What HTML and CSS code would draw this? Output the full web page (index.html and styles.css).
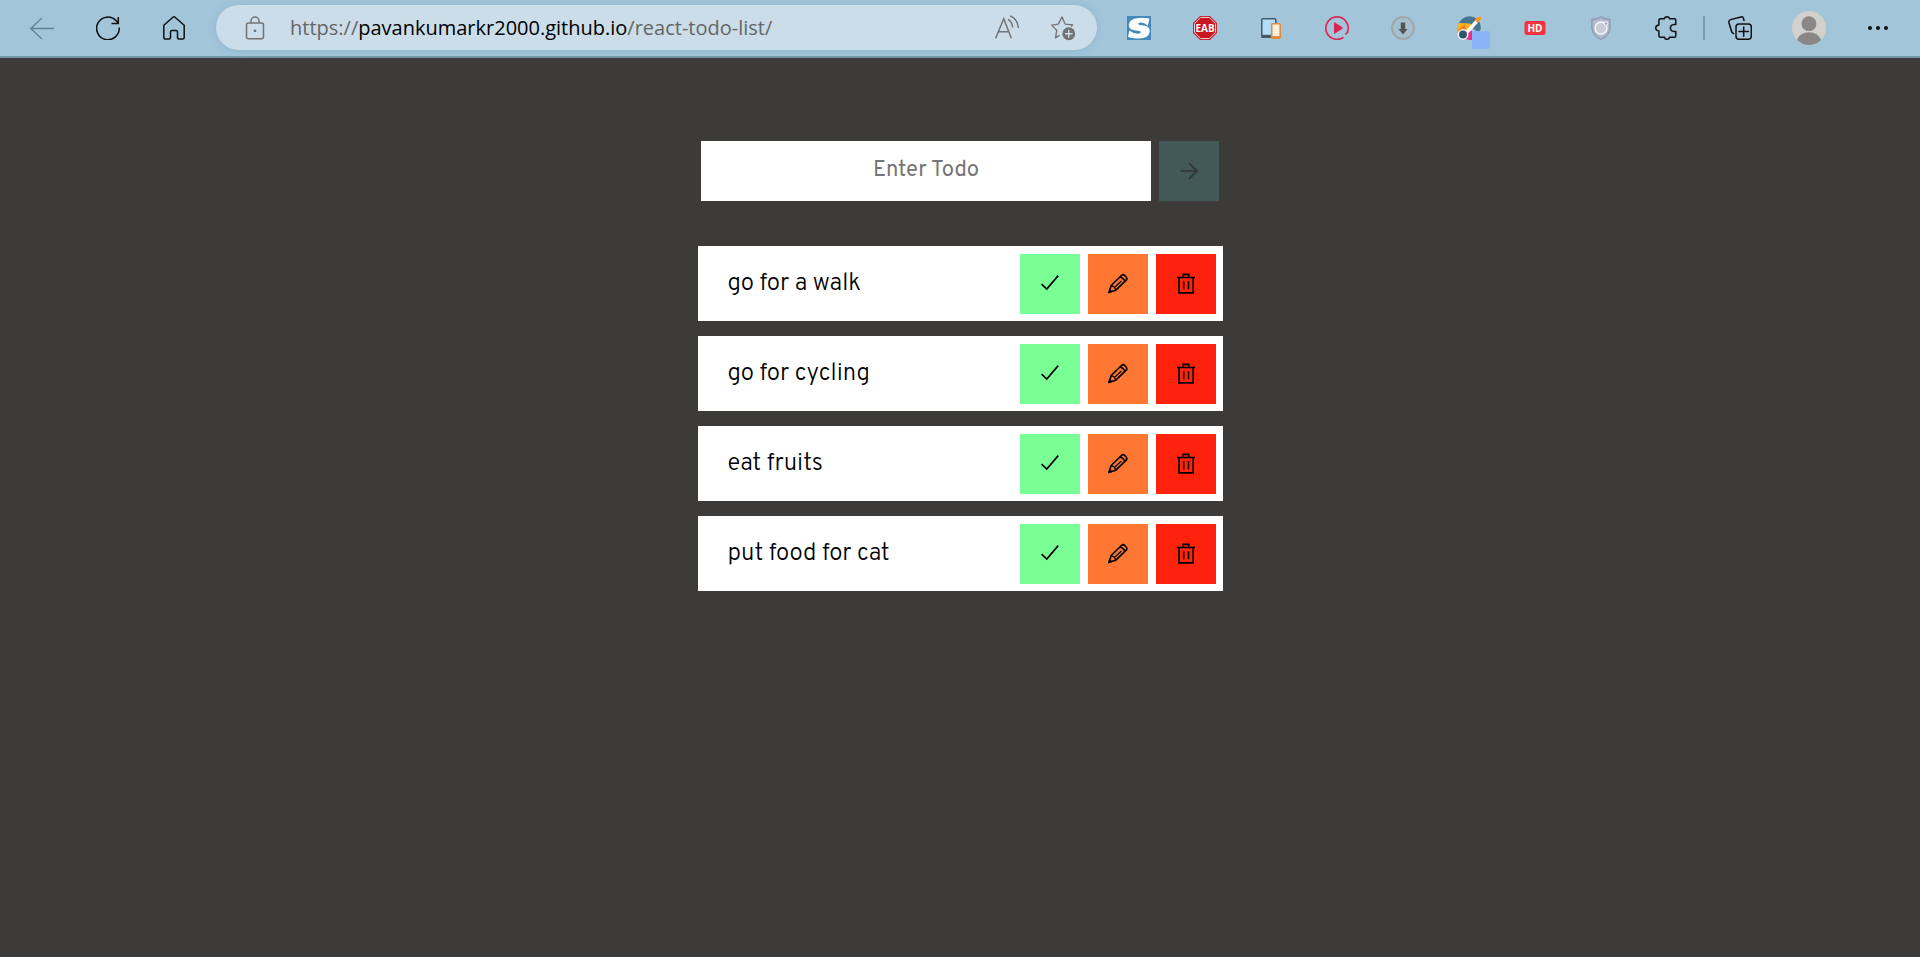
FILE: index.html
```html
<!DOCTYPE html>
<html lang="en">
<head>
<meta charset="utf-8">
<title>Todo List</title>
<link rel="stylesheet" href="styles.css">
</head>
<body>
<svg class="sprite" aria-hidden="true">
  <symbol id="check" viewBox="0 0 24 24"><path d="M3.600 12.200L8.800 17L20.200 3.600" fill="none" stroke="currentColor" stroke-width="1.700"/></symbol>
  <symbol id="pencil" viewBox="0 0 24 24"><g fill="none" stroke="currentColor" stroke-width="1.700" stroke-linejoin="round"><path d="M3 20.300L5.200 13.500L15.500 3.500Q17 2 18.600 3.400L20.200 5Q21.500 6.600 20.200 8.200L9.800 18.200Z"/><path d="M13.800 5.200C15.600 5 19 7.900 18.600 9.800" /><path d="M8.400 15.400L15.400 8.900" stroke-width="1.300"/><path d="M5.200 13.700C7 14 9.200 16 9.600 18.200" stroke-width="1.300"/></g><path d="M2 21.500L3.500 17L6.800 19.800Z" fill="currentColor"/></symbol>
  <symbol id="trash" viewBox="0 0 24 24"><g fill="none" stroke="currentColor" stroke-width="1.700"><path d="M3 5.500H21M5 5.500V20.800H19.200V5.500M9.200 5V2.300H14.800V5"/><path d="M9.700 9.200V17.300M14.500 9.200V17.300" stroke-width="1.500"/></g></symbol>
</svg>
<header class="toolbar">
  <button class="tool muted" aria-label="Back"><svg class="icon" viewBox="0 0 24 24"><path d="M24 12.500H.8M12 2L.8 12.500L12 23" fill="none" stroke="currentColor" stroke-width="1.300"/></svg></button>
  <button class="tool" aria-label="Refresh"><svg class="icon" viewBox="0 0 24 24"><path d="M23.200 11.500A11.300 11.300 0 1 1 20 4.500L22.300 7M22.300 1V7.500H15.500" fill="none" stroke="currentColor" stroke-width="1.500"/></svg></button>
  <button class="tool" aria-label="Home"><svg class="icon" viewBox="0 0 24 24"><path d="M1.800 9.200L11 1.200Q12 .5 13 1.200L22.200 9.200V21.500Q22.200 23 20.800 23H17Q15.500 23 15.500 21.500V16Q15.500 14.500 14 14.500H10Q8.500 14.500 8.500 16V21.500Q8.500 23 7 23H3.200Q1.800 23 1.800 21.500Z" fill="none" stroke="currentColor" stroke-width="1.500" stroke-linejoin="round"/></svg></button>
  <div class="address">
    <svg class="icon" viewBox="0 0 24 24"><g fill="none" stroke="currentColor" stroke-width="1.500"><rect x="3.500" y="7" width="17" height="15.800" rx="2"/><path d="M8 7V5A4 4 0 0 1 16 5V7"/></g><circle cx="12" cy="14.800" r="1.400" fill="currentColor"/></svg>
    <div class="url">https://<span class="host">pavankumarkr2000.github.io</span>/react-todo-list/</div>
    <button class="page-action" aria-label="Read aloud"><svg class="icon" viewBox="0 0 24 24"><g fill="none" stroke="currentColor" stroke-width="1.400"><path d="M1.500 21.500L9 3.500L16 21.500M4.200 15.500H13.700M13 4.200Q16.700 6 17.200 11.500M14.800 .8Q21.800 3.600 22.500 12"/></g></svg></button>
    <button class="page-action" aria-label="Add to favorites"><svg class="icon" viewBox="0 0 27 27"><path d="M10 21L5.700 23.700L7 16L1.800 10.500L8.700 9.400L12.500 2L15.700 9.400L23.500 10.300L22 12" fill="none" stroke="currentColor" stroke-width="1.400" stroke-linejoin="round"/><circle cx="19.500" cy="19.500" r="6.700" fill="currentColor"/><path d="M19.500 15.500V23.500M15.500 19.500H23.500" stroke="#cadde9" stroke-width="1.500"/></svg></button>
  </div>
  <nav class="extensions" aria-label="Extensions">
    <button class="tool" aria-label="Stylish"><svg class="icon" viewBox="0 0 24 24"><rect width="24" height="24" fill="#4389bd"/><path d="M22.500 2.500L20.800 9.800Q17.500 6.500 13.500 6.600Q11 6.800 11.200 8Q11.500 9 17 9.600Q23 10.500 22.800 15.500Q21.800 22.400 12 22.500Q6 22.500 1 21L2.300 14.500Q7 18 11 17.700Q14 17.300 13.800 16.200Q13.700 15 8.500 14.600Q1.300 13.700 1.800 8.800Q2.500 2.400 12 2Q17 1.500 22.500 2.500Z" fill="#fff"/></svg></button>
    <button class="tool" aria-label="Ad blocker"><svg class="icon" viewBox="0 0 24 24"><path d="M7 0H17L24 7V17L17 24H7L0 17V7Z" fill="#c62831"/><path d="M7.700 1.500H16.300L22.500 7.700V16.300L16.300 22.500H7.700L1.500 16.300V7.700Z" fill="#c7161f" stroke="#f4c9cc"/><text class="badge" x="12" y="16" text-anchor="middle">EAB</text></svg></button>
    <button class="tool" aria-label="Device preview"><svg class="icon" viewBox="0 0 24 24"><rect x="2.800" y="2.800" width="14" height="18.500" rx="1" fill="#b3dcfd" stroke="#455a66" stroke-width="1.500"/><path d="M2.500 18.800H13V22H2.500Z" fill="#455a66"/><rect x="12.700" y="7.700" width="8.500" height="14.500" rx="1" fill="#fff1dc" stroke="#e58b3b" stroke-width="1.600"/><path d="M12.700 20H21.200V22.500H12.700Z" fill="#e58b3b"/></svg></button>
    <button class="tool" aria-label="Video player"><svg class="icon" viewBox="0 0 24 24"><path d="M18.500 21.300A11.200 11.200 0 1 1 23 14.500Q22 18.500 20.300 17.600" fill="none" stroke="#d92c5b" stroke-width="1.700"/><path d="M9 7Q9 6 10 6.600L17.300 11.300Q18.200 12 17.300 12.700L10 17.400Q9 18 9 17Z" fill="#d92350"/></svg></button>
    <button class="tool" aria-label="Downloads"><svg class="icon" viewBox="0 0 24 24"><circle cx="12" cy="12" r="11" fill="#a5c0cf" stroke="#a3a6a6" stroke-width="1.900"/><path d="M9.800 6.500H14.200V13H16.500L12 18.500L7.500 13H9.800Z" fill="#555" /></svg></button>
    <button class="tool" aria-label="Colour picker"><svg class="icon" viewBox="0 0 24 24"><path d="M1.500 8Q5 .5 13 .3Q23 1 24 12Q23.500 15 21 16L12 10Z" fill="#45788f"/><path d="M0 16Q-.8 8 2.500 7L13 7.500L17 12L9 17Z" fill="#f9b51f"/><path d="M0 15L8 8L9 16Z" fill="#f48020"/><path d="M9 15H15V24Q10 24 8 22Z" fill="#ed2d88"/><path d="M10 16L20 5" stroke="#fff" stroke-width="3.400"/><path d="M17.500 4Q20 0 24 1Q24.500 5 20.500 7Z" fill="#f69a20"/><circle cx="6" cy="18.500" r="4.700" fill="#315466" stroke="#eef3f7" stroke-width="1.500"/></svg><span class="status"></span></button>
    <button class="tool" aria-label="HD"><svg class="icon" viewBox="0 0 24 24"><rect x="1.500" y="5" width="21" height="14" rx="2.500" fill="#f7333c"/><text class="badge" x="12" y="15.500" text-anchor="middle">HD</text></svg></button>
    <button class="tool" aria-label="Privacy shield"><svg class="icon" viewBox="0 0 24 24"><path d="M12 .7Q16 3.200 21.200 3.300V12Q20.500 20 12 23.500Q3.500 20 2.800 12V3.300Q8 3.200 12 .7Z" fill="#a6afbf" stroke="#8797ad"/><path d="M12 2.500Q15 4.500 19.500 5V12Q19 18.500 12 21.500Q5 18.500 4.500 12V5Q9 4.500 12 2.500Z" fill="#b5bccb"/><circle cx="12" cy="12" r="5.900" fill="#c8ccd6" stroke="#f5f7fb" stroke-width="1.500"/><circle cx="17" cy="7.500" r="1.900" fill="#a6afbf" stroke="#f5f7fb"/></svg></button>
    <button class="tool" aria-label="Extensions"><svg class="icon" viewBox="0 0 24 24"><path d="M5.500 2.700H9.500Q9.700 .9 12 .8Q14.300 .9 14.500 2.700H19.200Q20.800 2.700 20.800 4.300V8.500H19Q15.500 8.800 15.400 12Q15.500 15.200 19 15.500H20.800V19.700Q20.800 21.300 19.200 21.300H14.500Q14.300 23.200 12 23.300Q9.700 23.200 9.500 21.300H5.500Q3.900 21.300 3.900 19.700V15Q.8 14.800 .7 12Q.8 9.200 3.900 9V4.300Q3.900 2.700 5.500 2.700Z" fill="none" stroke="currentColor" stroke-width="1.500" stroke-linejoin="round"/></svg></button>
  </nav>
  <div class="divider"></div>
  <div class="browser-menu">
    <button class="tool" aria-label="Collections"><svg class="icon" viewBox="0 0 24 24"><g fill="none" stroke="currentColor" stroke-width="1.500" stroke-linecap="round"><rect x="8" y="8" width="15.300" height="15.300" rx="3"/><path d="M15.700 11V20.300M11 15.600H20.400M5.500 17.500Q4 17 3.600 15.500L.9 6.500Q.5 4.500 2.500 3.600L13 .9Q15 .6 15.500 2.500L16 4.500"/></g></svg></button>
    <button class="tool" aria-label="Profile"><svg class="avatar" viewBox="0 0 34 34"><circle cx="17" cy="17" r="17" fill="#d3d1ce"/><circle cx="17" cy="12.700" r="7.400" fill="#8a8886"/><path d="M5 29Q8 21.500 17 21.300Q26 21.500 29 29Q24 34 17 34Q10 34 5 29Z" fill="#8a8886"/></svg></button>
    <button class="tool" aria-label="More"><svg class="icon" viewBox="0 0 24 24"><g fill="currentColor"><circle cx="4" cy="12" r="2"/><circle cx="12" cy="12" r="2"/><circle cx="20" cy="12" r="2"/></g></svg></button>
  </div>
</header>
<main class="app">
  <form class="todo-form">
    <input class="todo-input" type="text" placeholder="Enter Todo" aria-label="Enter Todo">
    <button class="square submit" type="button" aria-label="Add todo"><svg class="icon" viewBox="0 0 24 24"><path d="M3.500 12H20M12 4.200L20 12L12 19.800" fill="none" stroke="currentColor" stroke-width="1.700"/></svg></button>
  </form>
  <ul class="todos">
    <li class="todo"><span class="label">go for a walk</span><button class="square done" aria-label="Complete"><svg class="icon"><use href="#check"/></svg></button><button class="square edit" aria-label="Edit"><svg class="icon"><use href="#pencil"/></svg></button><button class="square delete" aria-label="Delete"><svg class="icon"><use href="#trash"/></svg></button></li>
    <li class="todo"><span class="label">go for cycling</span><button class="square done" aria-label="Complete"><svg class="icon"><use href="#check"/></svg></button><button class="square edit" aria-label="Edit"><svg class="icon"><use href="#pencil"/></svg></button><button class="square delete" aria-label="Delete"><svg class="icon"><use href="#trash"/></svg></button></li>
    <li class="todo"><span class="label">eat fruits</span><button class="square done" aria-label="Complete"><svg class="icon"><use href="#check"/></svg></button><button class="square edit" aria-label="Edit"><svg class="icon"><use href="#pencil"/></svg></button><button class="square delete" aria-label="Delete"><svg class="icon"><use href="#trash"/></svg></button></li>
    <li class="todo"><span class="label">put food for cat</span><button class="square done" aria-label="Complete"><svg class="icon"><use href="#check"/></svg></button><button class="square edit" aria-label="Edit"><svg class="icon"><use href="#pencil"/></svg></button><button class="square delete" aria-label="Delete"><svg class="icon"><use href="#trash"/></svg></button></li>
  </ul>
</main>
</body>
</html>
```
FILE: styles.css
```css
* { box-sizing: border-box; }
body {
  margin: 0;
  min-height: 100vh;
  background: #3d3b3a;
  font-family: Overpass, Roboto, sans-serif;
}
button { border: 0; padding: 0; background: none; color: inherit; font: inherit; }
.sprite { display: none; }
.icon { display: block; width: 24px; height: 24px; }

.toolbar {
  display: flex;
  align-items: center;
  height: 58px;
  padding: 0 9px 1px;
  background: #a2c5da;
  border-bottom: 2px solid #7495a3;
  color: #101010;
}
.tool {
  position: relative;
  display: flex;
  flex: none;
  align-items: center;
  justify-content: center;
  width: 66px;
  height: 55px;
}
.muted { color: #668394; }
.address {
  display: flex;
  flex: 1;
  align-items: center;
  height: 45px;
  margin: 0 9px;
  padding: 0 21px 0 27px;
  border-radius: 23px;
  background: #cadde9;
  box-shadow: 0 0 8px #8fb4cb;
  color: #737373;
}
.url {
  flex: 1;
  margin-left: 23px;
  font: 20px "Open Sans", "Noto Sans", sans-serif;
  color: #666;
  white-space: nowrap;
}
.host { color: #000; }
.page-action { display: flex; margin-left: 30px; }
.page-action .icon { width: 26px; height: 26px; }
.extensions { display: flex; }
.browser-menu { display: flex; gap: 3px; }
.badge { font: bold 10px "Open Sans", sans-serif; fill: #fff; }
.status {
  position: absolute;
  right: 12px;
  bottom: 6px;
  width: 18px;
  height: 18px;
  border-radius: 2px;
  background: #8ab4f8;
}
.divider { width: 2px; height: 24px; margin: 0 2px 0 3px; background: #7f9dac; }
.avatar { width: 34px; height: 34px; }

.app {
  display: flex;
  flex-direction: column;
  align-items: center;
  gap: 45px;
  padding: 83px 20px 20px;
}
.todo-form { display: flex; gap: 8px; width: 100%; max-width: 518px; }
.todo-input {
  flex: 1;
  min-width: 0;
  height: 60px;
  padding: 0 0 2px;
  border: 0;
  background: #fff;
  font: 22px Overpass, Roboto, sans-serif;
  text-align: center;
}
.todo-input::placeholder { color: #757575; }
.square {
  display: flex;
  flex: none;
  align-items: center;
  justify-content: center;
  width: 60px;
  height: 60px;
  color: #000;
}
.submit { background: #425957; color: #303432; }
.todos {
  display: grid;
  gap: 15px;
  width: 100%;
  max-width: 525px;
  margin: 0;
  padding: 0;
  list-style: none;
}
.todo {
  display: flex;
  align-items: center;
  gap: 8px;
  padding: 8px 7px 7px 30px;
  background: #fff;
}
.label { flex: 1; font-size: 24px; font-weight: 300; color: #000; }
.done { background: #7aff94; }
.edit { background: #ff7733; }
.delete { background: #ff220c; }
```
